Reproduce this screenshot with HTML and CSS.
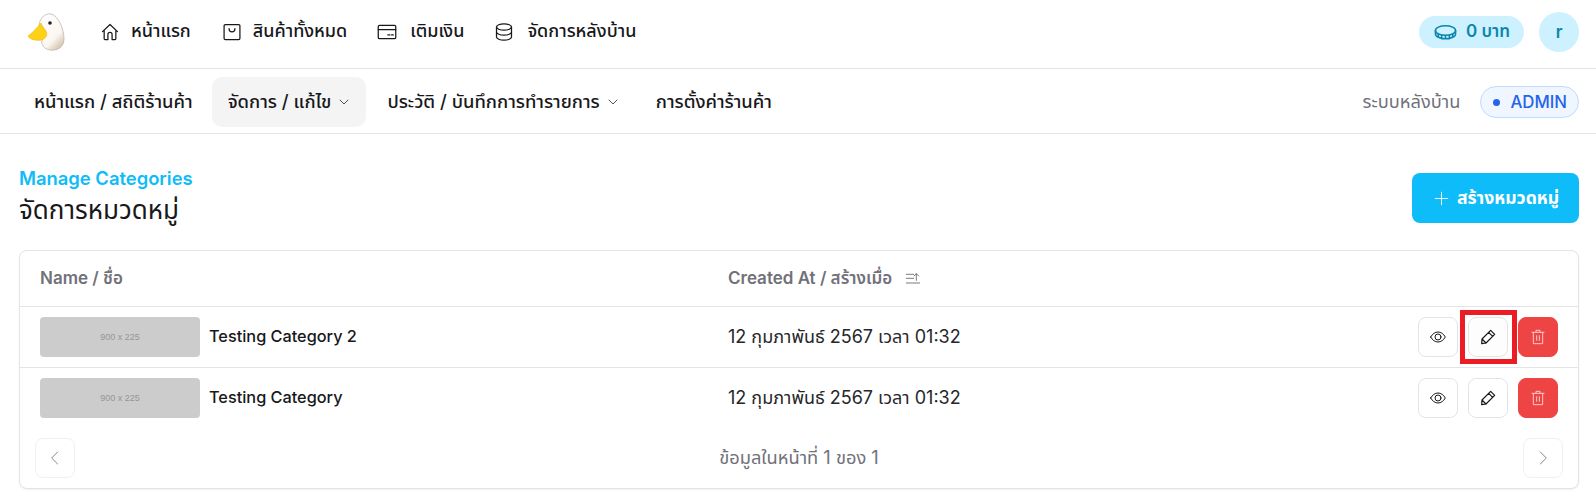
FILE: index.html
```html
<!DOCTYPE html>
<html lang="th">
<head>
<meta charset="utf-8">
<title>จัดการหมวดหมู่</title>
<link rel="stylesheet" href="styles.css">
</head>
<body>
<header class="topbar">
  <svg class="logo" viewBox="0 0 40 40" width="40" height="40">
    <defs>
      <linearGradient id="duck" x1="0.2" y1="0" x2="0.9" y2="1"><stop offset="0" stop-color="#fff"/><stop offset="0.65" stop-color="#fbf6ef"/><stop offset="1" stop-color="#cbb59d"/></linearGradient>
    </defs>
    <path d="M13 13 C14 5 20 1 25 2 C33 4 38 18 38 27 C38 36 30 39 24 38 C18 37 15 33 16 28 C18 24 13 20 13 13Z" fill="url(#duck)" stroke="#bdb8b0" stroke-width="0.8"/>
    <path d="M15 11 C11 16 6 21 2 24 C4 28 11 29 16 28 C20 26 22 23 20 19 C18 16 16 14 15 11Z" fill="#fcd116" stroke="#e8ab12" stroke-width="0.5"/>
    <circle cx="24" cy="11" r="1.8" fill="#222"/>
  </svg>
  <nav class="mainnav">
    <a class="mainlink">
      <svg class="ic" viewBox="0 0 24 24"><path d="M3 11.500 12 3l9 8.500M5 10v10a1 1 0 0 0 1 1h3.500v-6a2.500 2.500 0 0 1 5 0v6H18a1 1 0 0 0 1-1V10"/></svg>
      <span>หน้าแรก</span>
    </a>
    <a class="mainlink">
      <svg class="ic" viewBox="0 0 24 24"><rect x="2.500" y="3" width="19" height="18" rx="1.500"/><path d="M8.500 8c0 5 7 5 7 0"/></svg>
      <span>สินค้าทั้งหมด</span>
    </a>
    <a class="mainlink mainlink-wide">
      <svg class="ic" viewBox="0 0 24 24"><rect x="1.500" y="4" width="21" height="16" rx="1.500"/><path d="M1.500 9h21M13 15.500h2.500M17.500 15.500h2"/></svg>
      <span>เติมเงิน</span>
    </a>
    <a class="mainlink mainlink-wide">
      <svg class="ic" viewBox="0 0 24 24"><ellipse cx="12" cy="6" rx="9" ry="3.800"/><path d="M3 6v12c0 2 4 3.800 9 3.800s9-1.800 9-3.800V6M3 12c0 2 4 3.800 9 3.800s9-1.800 9-3.800"/></svg>
      <span>จัดการหลังบ้าน</span>
    </a>
  </nav>
  <div class="account">
    <div class="wallet">
      <svg class="coin" viewBox="0 0 24 16"><ellipse cx="12" cy="6.500" rx="10.500" ry="5"/><path d="M1.500 6.500v3.500c0 2.700 4.700 5 10.500 5s10.500-2.300 10.500-5V6.500M8 11.500V15M12 12v3M16 11.500V15M4.500 10v3.200M19.500 10v3.200"/></svg>
      <span>0 บาท</span>
    </div>
    <div class="avatar">r</div>
  </div>
</header>

<div class="subbar">
  <nav class="subnav">
    <a class="sublink sublink-first">หน้าแรก / สถิติร้านค้า</a>
    <a class="sublink is-active">จัดการ / แก้ไข
      <svg class="chev" viewBox="0 0 24 24"><path d="m4 8 8 8 8-8"/></svg>
    </a>
    <a class="sublink">ประวัติ / บันทึกการทำรายการ
      <svg class="chev" viewBox="0 0 24 24"><path d="m4 8 8 8 8-8"/></svg>
    </a>
    <a class="sublink">การตั้งค่าร้านค้า</a>
  </nav>
  <div class="role">
    <span class="role-label">ระบบหลังบ้าน</span>
    <span class="role-badge"><i class="dot"></i>ADMIN</span>
  </div>
</div>

<main class="page">
  <div class="page-head">
    <div>
      <div class="eyebrow">Manage Categories</div>
      <h1 class="title">จัดการหมวดหมู่</h1>
    </div>
    <button class="create-btn">
      <svg class="plus" viewBox="0 0 24 24"><path d="M12 2v20M2 12h20"/></svg>
      สร้างหมวดหมู่
    </button>
  </div>

  <section class="card">
    <div class="row row-head">
      <div class="cell-name">Name / ชื่อ</div>
      <div class="cell-date">Created At / สร้างเมื่อ
        <svg class="sort" viewBox="0 0 24 24"><path d="M2 5h11M2 11h11M2 18h20M17 14V4M13.500 7.500 17 4l3.500 3.500"/></svg>
      </div>
    </div>

    <div class="row row-body">
      <div class="cell-name">
        <div class="thumb">900 x 225</div>
        <span class="name">Testing Category 2</span>
      </div>
      <div class="cell-date date">12 กุมภาพันธ์ 2567 เวลา 01:32</div>
      <div class="actions">
        <button class="act"><svg class="ic-sm" viewBox="0 0 24 24"><path d="M1 12c2.700-4.700 6.500-7.500 11-7.500s8.300 2.800 11 7.500c-2.700 4.700-6.500 7.500-11 7.500S3.700 16.700 1 12Z"/><circle cx="12" cy="12" r="4.500"/></svg></button>
        <span class="focus-mark">
          <button class="act act-hl"><svg class="ic-sm ic-pen" viewBox="0 0 24 24"><path d="M16 2 22 8 9 21 2.500 22 3 15ZM13 5l6 6M3 15l6 6"/></svg></button>
        </span>
        <button class="act act-del"><svg class="ic-sm" viewBox="0 0 24 24"><path d="M3 5h18M9 5V2h6v3M5 5v17h14V5M10 10v7M14 10v7"/></svg></button>
      </div>
    </div>

    <div class="row row-body row-last">
      <div class="cell-name">
        <div class="thumb">900 x 225</div>
        <span class="name">Testing Category</span>
      </div>
      <div class="cell-date date">12 กุมภาพันธ์ 2567 เวลา 01:32</div>
      <div class="actions">
        <button class="act"><svg class="ic-sm" viewBox="0 0 24 24"><path d="M1 12c2.700-4.700 6.500-7.500 11-7.500s8.300 2.800 11 7.500c-2.700 4.700-6.500 7.500-11 7.500S3.700 16.700 1 12Z"/><circle cx="12" cy="12" r="4.500"/></svg></button>
        <button class="act"><svg class="ic-sm ic-pen" viewBox="0 0 24 24"><path d="M16 2 22 8 9 21 2.500 22 3 15ZM13 5l6 6M3 15l6 6"/></svg></button>
        <button class="act act-del"><svg class="ic-sm" viewBox="0 0 24 24"><path d="M3 5h18M9 5V2h6v3M5 5v17h14V5M10 10v7M14 10v7"/></svg></button>
      </div>
    </div>

    <div class="pager">
      <button class="pg"><svg class="ic-pg" viewBox="0 0 24 24"><path d="M16 3 7 12l9 9"/></svg></button>
      <span class="pg-text">ข้อมูลในหน้าที่ 1 ของ 1</span>
      <button class="pg"><svg class="ic-pg" viewBox="0 0 24 24"><path d="m8 3 9 9-9 9"/></svg></button>
    </div>
  </section>
</main>
</body>
</html>
```

FILE: styles.css
```css
* { box-sizing: border-box; }
html, body { margin: 0; padding: 0; background: #fff; }
body {
  font-family: "Inter", "Noto Sans Thai", "Noto Sans", "Noto Sans CJK SC", sans-serif;
  font-size: 16px;
  color: #18181b;
  height: 503px;
  overflow: hidden;
}
svg { fill: none; stroke: currentColor; stroke-linecap: round; stroke-linejoin: round; display: block; flex: none; }
a { color: inherit; }
button { font-family: inherit; cursor: pointer; }

.topbar {
  display: flex;
  align-items: center;
  height: 69px;
  padding: 0 17px 4px 26px;
  border-bottom: 1px solid #e4e4e7;
}
.logo { stroke: none; margin-right: 34px; }
.logo * { stroke-linecap: butt; }
.mainnav { display: flex; align-items: center; gap: 31px; }
.mainlink { display: flex; align-items: center; gap: 11px; font-weight: 500; font-size: 18px; line-height: 24px; padding-bottom: 2px; }
.mainlink-wide { gap: 13px; margin-left: -1px; }
.mainlink .ic { margin-top: 2px; }
.ic { width: 20px; height: 20px; stroke-width: 1.500; color: #18181b; }

.account { margin-left: auto; display: flex; align-items: center; gap: 15px; }
.wallet {
  display: flex;
  align-items: center;
  gap: 9px;
  height: 32px;
  width: 105px;
  padding-left: 15px;
  border-radius: 16px;
  background: #cdf1ff;
  color: #0a86ac;
  font-weight: 600;
  font-size: 17px;
}
.coin { width: 23px; height: 16px; stroke-width: 1.600; }
.avatar {
  width: 40px;
  height: 40px;
  border-radius: 50%;
  background: #cdf1ff;
  color: #0a86ac;
  display: flex;
  align-items: center;
  justify-content: center;
  font-weight: 600;
  font-size: 17px;
}

.subbar {
  display: flex;
  align-items: center;
  height: 65px;
  padding: 2px 17px 0 18px;
  border-bottom: 1px solid #e4e4e7;
}
.subnav { display: flex; align-items: center; gap: 5px; }
.sublink {
  display: flex;
  align-items: center;
  gap: 7px;
  height: 50px;
  padding: 0 16px;
  border-radius: 10px;
  font-weight: 500;
  font-size: 18.400px;
}
.sublink-first { padding-right: 14px; }
.sublink.is-active { background: #f4f4f5; }
.chev { width: 12px; height: 12px; stroke-width: 1.500; }
.role { margin-left: auto; display: flex; align-items: center; gap: 20px; }
.role-label { color: #71717a; font-size: 18.300px; }
.role-badge {
  display: flex;
  align-items: center;
  gap: 10px;
  height: 32px;
  padding: 0 11px 0 12px;
  border: 1px solid #bfdbfe;
  border-radius: 16px;
  background: #eff6ff;
  color: #2563eb;
  font-weight: 500;
  font-size: 16.800px;
}
.dot { width: 7px; height: 7px; border-radius: 50%; background: #2563eb; }

.page { padding: 0 17px 0 19px; }
.page-head {
  display: flex;
  align-items: flex-start;
  justify-content: space-between;
  height: 116px;
  padding-top: 30px;
}
.eyebrow { color: #0ebcf9; font-size: 18.400px; font-weight: 600; line-height: 28px; }
.title { margin: 0; font-size: 26px; font-weight: 400; line-height: 36px; }
.create-btn {
  display: flex;
  align-items: center;
  justify-content: center;
  gap: 8px;
  width: 167px;
  height: 50px;
  margin-top: 9px;
  padding: 0 0 0 2px;
  border: 0;
  border-radius: 8px;
  background: #0ebcf9;
  color: #fff;
  font-size: 17.600px;
  font-weight: 700;
}
.plus { width: 15px; height: 15px; stroke-width: 1.500; }

.card {
  height: 239px;
  border: 1px solid #e4e4e7;
  border-radius: 8px;
  box-shadow: 0 1px 2px rgba(0, 0, 0, .06);
  background: #fff;
}
.row { display: flex; align-items: center; padding: 0 20px; }
.row-head { height: 56px; border-bottom: 1px solid #e4e4e7; color: #71717a; font-weight: 600; font-size: 17px; }
.row-body { height: 61px; border-bottom: 1px solid #e4e4e7; }
.row-last { height: 60px; border-bottom: 0; }
.cell-name { width: 688px; display: flex; align-items: center; gap: 9px; }
.cell-date { display: flex; align-items: center; gap: 13px; }
.sort { width: 16px; height: 16px; stroke-width: 1.400; }
.thumb {
  width: 160px;
  height: 40px;
  border-radius: 4px;
  background: #cccccc;
  color: #969696;
  display: flex;
  align-items: center;
  justify-content: center;
  font-family: "Liberation Sans", sans-serif;
  font-size: 9px;
}
.name { font-weight: 500; font-size: 16.300px; padding-bottom: 2px; }
.date { color: #27272a; font-size: 18px; }
.actions { margin-left: auto; display: flex; align-items: center; gap: 10px; }
.act {
  width: 40px;
  height: 40px;
  padding: 0;
  border: 1px solid #e4e4e7;
  border-radius: 8px;
  background: #fff;
  color: #18181b;
  display: flex;
  align-items: center;
  justify-content: center;
}
.act-hl { background: #fdfdfd; }
.act-del { background: #ef4444; border-color: #ef4444; color: #fecaca; }
.ic-sm { width: 16px; height: 16px; stroke-width: 1.500; }
.ic-pen { stroke-width: 1.800; }
.focus-mark { position: relative; display: block; }
.focus-mark::after {
  content: "";
  box-sizing: border-box;
  position: absolute;
  left: -8px;
  top: -7px;
  width: 57px;
  height: 54px;
  border: 5px solid #ec1c24;
  pointer-events: none;
}

.pager { display: flex; align-items: center; justify-content: space-between; padding: 10px 15px; }
.pg {
  width: 40px;
  height: 40px;
  padding: 0;
  border: 1px solid #f0f0f2;
  border-radius: 8px;
  background: #fff;
  color: #71717a;
  display: flex;
  align-items: center;
  justify-content: center;
}
.ic-pg { width: 16px; height: 16px; stroke-width: 1.300; }
.pg-text { color: #71717a; font-size: 18.300px; }
```
